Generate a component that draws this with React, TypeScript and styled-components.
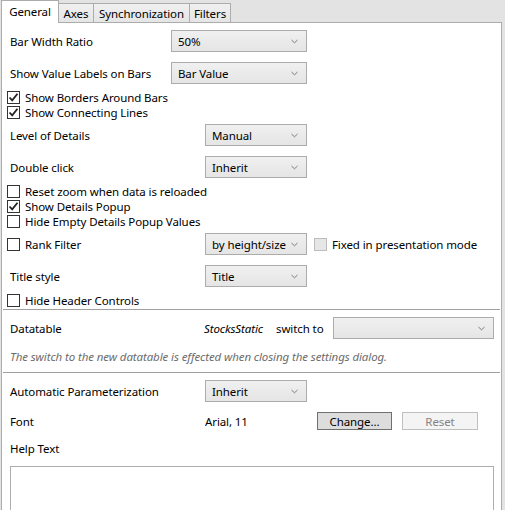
import styled, { createGlobalStyle } from "styled-components";

const GlobalStyle = createGlobalStyle`
  html, body {
    margin: 0;
    padding: 0;
    background: #e3e3e3;
    overflow: hidden;
  }
  body {
    font-family: "Noto Sans", "Open Sans", sans-serif;
    font-size: 11.5px;
    letter-spacing: -0.1px;
    line-height: 15px;
    color: #000;
  }
`;

const Page = styled.div`
  width: 505px;
  height: 510px;
  display: flex;
  flex-direction: column;
`;

const TabStrip = styled.div`
  display: flex;
  align-items: flex-end;
  height: 23px;
  padding-left: 1px;
  position: relative;
  z-index: 1;
`;

type TabProps = { $active?: boolean; $width: number };
const Tab = styled.div<TabProps>`
  box-sizing: border-box;
  width: ${(p) => p.$width}px;
  height: ${(p) => (p.$active ? 23 : 19)}px;
  margin-right: -1px;
  margin-bottom: ${(p) => (p.$active ? -1 : 0)}px;
  border: 1px solid #acacac;
  border-bottom: none;
  background: ${(p) =>
    p.$active ? "#fff" : "linear-gradient(#f0f0f0, #e5e5e5)"};
  display: flex;
  align-items: center;
  justify-content: center;
  padding-bottom: ${(p) => (p.$active ? 1 : 0)}px;
  white-space: nowrap;
  position: relative;
  z-index: ${(p) => (p.$active ? 2 : 1)};
`;

const Panel = styled.div`
  box-sizing: border-box;
  margin-left: 1px;
  width: 501px;
  flex: 1;
  background: #fff;
  border: 1px solid #acacac;
  padding: 0 7px 0 8px;
  display: flex;
  flex-direction: column;
`;

type RowProps = { $top: number };
const Row = styled.div<RowProps>`
  display: flex;
  align-items: center;
  height: 22px;
  margin-top: ${(p) => p.$top}px;
  white-space: nowrap;
`;

const CheckRow = styled.label<RowProps>`
  display: flex;
  align-items: center;
  height: 15px;
  margin-top: ${(p) => p.$top}px;
  margin-left: -3px;
  gap: 5px;
  white-space: nowrap;
`;

const Label = styled.span<{ $width: number }>`
  width: ${(p) => p.$width}px;
  flex-shrink: 0;
`;

const Box = styled.span<{ $disabled?: boolean }>`
  box-sizing: border-box;
  width: 13px;
  height: 13px;
  flex-shrink: 0;
  border: 1px solid ${(p) => (p.$disabled ? "#bcbcbc" : "#333")};
  background: ${(p) => (p.$disabled ? "#e6e6e6" : "#fff")};
  display: flex;
  align-items: center;
  justify-content: center;
`;

const Select = styled.div<{ $width: number }>`
  box-sizing: border-box;
  width: ${(p) => p.$width}px;
  height: 22px;
  flex-shrink: 0;
  border: 1px solid #acacac;
  background: linear-gradient(#f0f0f0, #e5e5e5);
  display: flex;
  align-items: center;
  justify-content: space-between;
  padding: 0 8px 0 6px;
`;

const Separator = styled.div<RowProps>`
  height: 1px;
  background: #a0a0a0;
  margin: ${(p) => p.$top}px -6px 0 -7px;
`;

const Note = styled.div<RowProps>`
  height: 16px;
  line-height: 16px;
  margin-top: ${(p) => p.$top}px;
  font-style: italic;
  color: #6d6d6d;
  white-space: nowrap;
`;

const Italic = styled.span<{ $width: number }>`
  width: ${(p) => p.$width}px;
  font-style: italic;
  flex-shrink: 0;
`;

const Button = styled.div<{ $disabled?: boolean; $width: number }>`
  box-sizing: border-box;
  width: ${(p) => p.$width}px;
  height: 18px;
  flex-shrink: 0;
  border: 1px solid ${(p) => (p.$disabled ? "#bfbfbf" : "#707070")};
  background: ${(p) => (p.$disabled ? "#f4f4f4" : "#dddddd")};
  color: ${(p) => (p.$disabled ? "#838383" : "#000")};
  display: flex;
  align-items: center;
  justify-content: center;
`;

const TextLabel = styled.div<RowProps>`
  height: 16px;
  line-height: 16px;
  margin-top: ${(p) => p.$top}px;
`;

const TextArea = styled.div<RowProps>`
  box-sizing: border-box;
  margin-top: ${(p) => p.$top}px;
  height: 60px;
  border: 1px solid #acacac;
  background: #fff;
`;

const Chevron = () => (
  <svg width="7" height="5" viewBox="0 0 7 5">
    <path d="M0.5 1 L3.5 3.8 L6.5 1" fill="none" stroke="#7a7a7a" strokeWidth="1" />
  </svg>
);

const Check = () => (
  <svg width="11" height="11" viewBox="0 0 11 11">
    <path d="M1.5 5.5 L4.2 8.3 L9.5 1.8" fill="none" stroke="#222" strokeWidth="1.8" />
  </svg>
);

function Dropdown({ value, width }: { value: string; width: number }) {
  return (
    <Select $width={width}>
      <span>{value}</span>
      <Chevron />
    </Select>
  );
}

function CheckItem({
  text,
  checked = false,
  top,
}: {
  text: string;
  checked?: boolean;
  top: number;
}) {
  return (
    <CheckRow $top={top}>
      <Box>{checked && <Check />}</Box>
      {text}
    </CheckRow>
  );
}

export default function App() {
  return (
    <Page>
      <GlobalStyle />
      <TabStrip>
        <Tab $active $width={58}>General</Tab>
        <Tab $width={36}>Axes</Tab>
        <Tab $width={97}>Synchronization</Tab>
        <Tab $width={42}>Filters</Tab>
      </TabStrip>
      <Panel>
        <Row $top={7}>
          <Label $width={161}>Bar Width Ratio</Label>
          <Dropdown value="50%" width={136} />
        </Row>
        <Row $top={10}>
          <Label $width={161}>Show Value Labels on Bars</Label>
          <Dropdown value="Bar Value" width={136} />
        </Row>
        <CheckItem top={6} checked text="Show Borders Around Bars" />
        <CheckItem top={0} checked text="Show Connecting Lines" />
        <Row $top={4}>
          <Label $width={195}>Level of Details</Label>
          <Dropdown value="Manual" width={102} />
        </Row>
        <Row $top={10}>
          <Label $width={195}>Double click</Label>
          <Dropdown value="Inherit" width={102} />
        </Row>
        <CheckItem top={6} text="Reset zoom when data is reloaded" />
        <CheckItem top={0} checked text="Show Details Popup" />
        <CheckItem top={0} text="Hide Empty Details Popup Values" />
        <Row $top={4}>
          <CheckRow $top={0} style={{ width: 198 }}>
            <Box />
            Rank Filter
          </CheckRow>
          <Dropdown value="by height/size" width={102} />
          <CheckRow $top={0} style={{ marginLeft: 7 }}>
            <Box $disabled />
            Fixed in presentation mode
          </CheckRow>
        </Row>
        <Row $top={10}>
          <Label $width={195}>Title style</Label>
          <Dropdown value="Title" width={102} />
        </Row>
        <CheckItem top={6} text="Hide Header Controls" />
        <Separator $top={1} />
        <Row $top={7}>
          <Label $width={194}>Datatable</Label>
          <Italic $width={72}>StocksStatic</Italic>
          <Label $width={57}>switch to</Label>
          <Dropdown value="" width={161} />
        </Row>
        <Note $top={10}>
          The switch to the new datatable is effected when closing the settings dialog.
        </Note>
        <Separator $top={7} />
        <Row $top={7}>
          <Label $width={195}>Automatic Parameterization</Label>
          <Dropdown value="Inherit" width={102} />
        </Row>
        <Row $top={10} style={{ height: 18 }}>
          <Label $width={195}>Font</Label>
          <Label $width={112}>Arial, 11</Label>
          <Button $width={75}>Change...</Button>
          <Button $disabled $width={76} style={{ marginLeft: 10 }}>
            Reset
          </Button>
        </Row>
        <TextLabel $top={11}>Help Text</TextLabel>
        <TextArea $top={9} />
      </Panel>
    </Page>
  );
}
